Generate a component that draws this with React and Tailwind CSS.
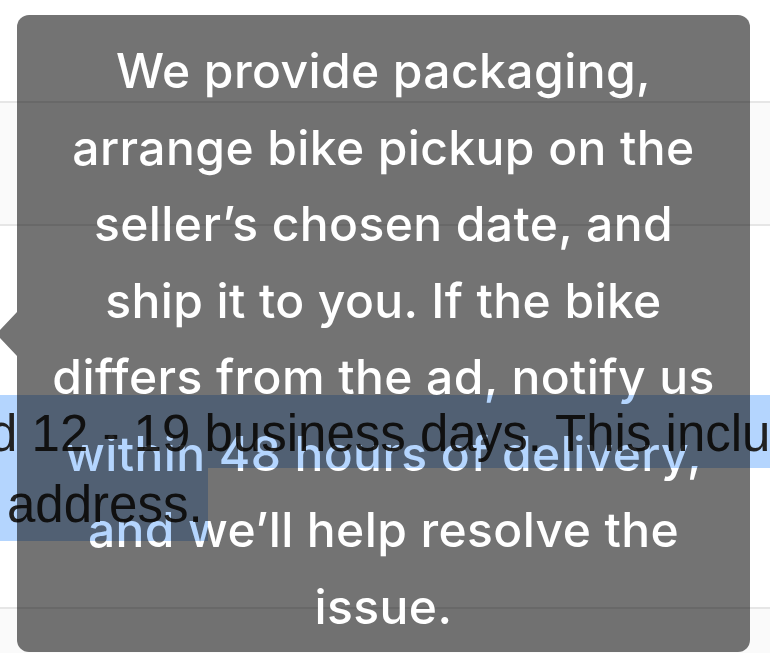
const Row = ({ className, children }) => (
  <div className={`border-b-2 border-[#e6e6e6] ${className}`}>{children}</div>
);

const Tooltip = () => (
  <div className="absolute left-[17px] top-[15px] z-10 w-[733px] h-[637px] rounded-[12px] bg-black/55 pt-[18px]">
    <svg
      className="absolute left-[-21px] top-[297px]"
      width="21"
      height="44"
      viewBox="0 0 21 44"
    >
      <path d="M21 0 L2 20 Q0 22 2 24 L21 44 Z" fill="rgba(0,0,0,0.55)" />
    </svg>
    <p className="text-center text-white text-[48px] leading-[76.5px] font-medium font-['Inter',sans-serif] tracking-[0.4px]">
      We provide packaging,
      <br />
      arrange bike pickup on the
      <br />
      seller’s chosen date, and
      <br />
      ship it to you. If the bike
      <br />
      differs from the ad, notify us
      <br />
      within 48 hours of delivery,
      <br />
      and we’ll help resolve the
      <br />
      issue.
    </p>
  </div>
);

export default function App() {
  return (
    <div className="relative w-[770px] h-[653px] overflow-hidden bg-white font-['Inter',sans-serif]">
      <Row className="h-[103px] bg-white" />
      <Row className="h-[123px] bg-[#fafafa]" />
      <Row className="h-[383px] bg-white pt-[169px]">
        <div className="relative z-20 mix-blend-multiply text-[#222] text-[51px] leading-[73px] whitespace-nowrap font-['Liberation_Sans',Arial,sans-serif]">
          <div className="bg-[#b4d5fe] h-[73px] -ml-[11px] pt-[2px]">
            d 12 - 19 business days. This includes
          </div>
          <div className="bg-[#b4d5fe] h-[73px] w-[208px] pl-[7px]">address.</div>
        </div>
      </Row>
      <div className="h-[60px] bg-[#fafafa]" />
      <Tooltip />
    </div>
  );
}
